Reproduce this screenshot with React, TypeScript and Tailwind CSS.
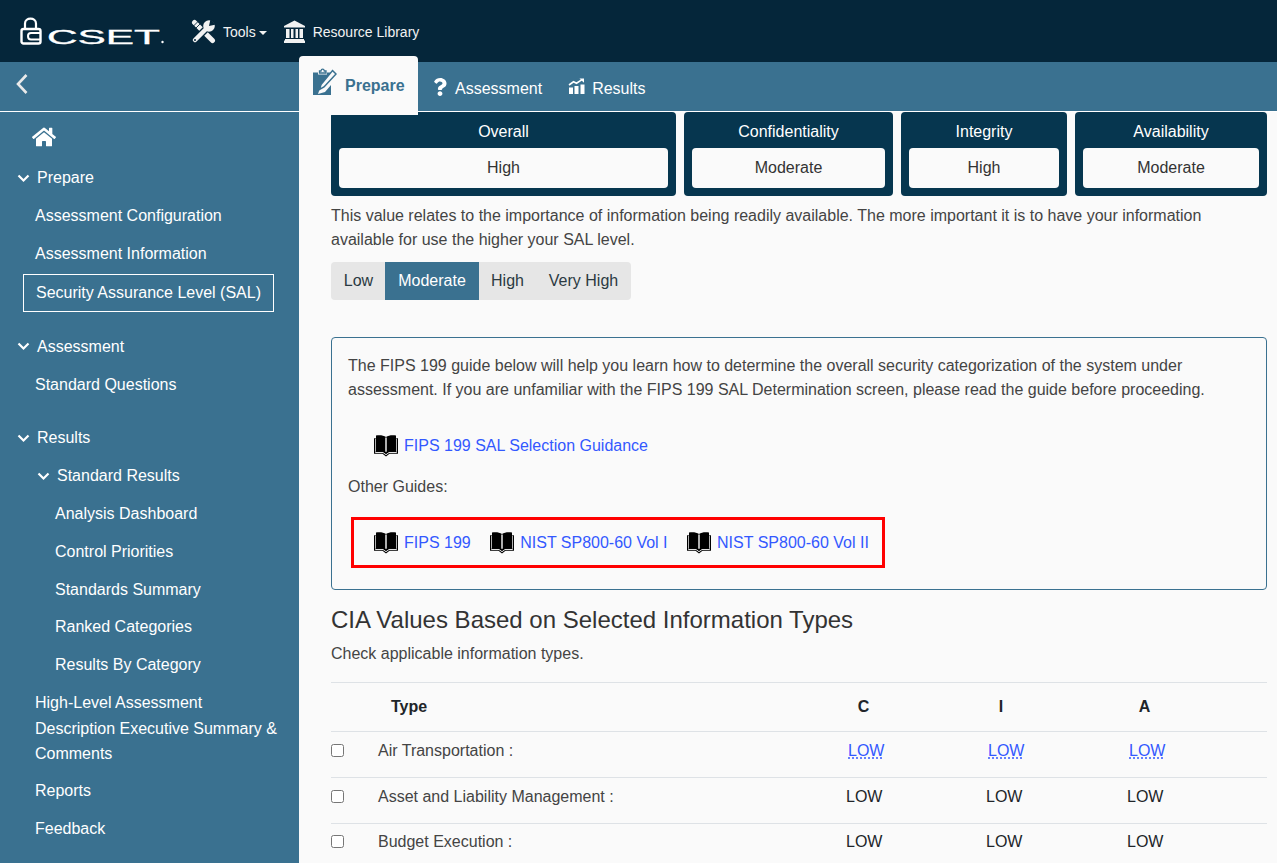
import React from "react";
import { FaHome, FaQuestion } from "react-icons/fa";

function Book() {
  return (
    <svg width="24" height="22" viewBox="0 0 24 21" preserveAspectRatio="none" className="shrink-0">
      <path d="M0 3H2V0.5C5 0 9.5 0 12 2C14.500 0 19 0 22 0.5V3H24V18H15.500L12 20.500L8.500 18H0Z" fill="#000" />
      <path d="M1.200 16.700H9L12 18.800L15 16.700H22.800" fill="none" stroke="#fafafa" strokeWidth="0.900" />
      <path d="M12 2.500V16" stroke="#fafafa" strokeWidth="1.400" />
      <path d="M1.500 3.500V16M22.500 3.500V16" stroke="#fafafa" strokeWidth="0.700" />
    </svg>
  );
}

function GuideLink({ label }: { label: string }) {
  return (
    <span className="flex items-center gap-[6px]">
      <Book />
      <a className="text-[#3358ff]">{label}</a>
    </span>
  );
}

function NavRow({ label, indent, chevron }: { label: string; indent: string; chevron?: boolean }) {
  return (
    <div className={`flex h-[37.8px] items-center text-white ${indent}`}>
      {chevron && (
        <svg width="13" height="9" viewBox="0 0 13 9" className="mr-[7px]">
          <path d="M1.500 1.500L6.500 6.500L11.500 1.500" fill="none" stroke="#fff" strokeWidth="2.200" />
        </svg>
      )}
      {label}
    </div>
  );
}

function Sidebar() {
  return (
    <aside className="flex w-[299px] shrink-0 flex-col bg-[#3a7190]">
      <div className="flex h-[47.500px] items-center pt-[2px] pl-[32px] text-white">
        <FaHome size={24} />
      </div>
      <NavRow label="Prepare" indent="pl-[17px]" chevron />
      <NavRow label="Assessment Configuration" indent="pl-[35px]" />
      <NavRow label="Assessment Information" indent="pl-[35px]" />
      <div className="mx-[23px] mt-px mb-[16px] flex h-[38px] w-[251px] items-center border border-white pl-[12px] text-white">
        Security Assurance Level (SAL)
      </div>
      <NavRow label="Assessment" indent="pl-[17px]" chevron />
      <NavRow label="Standard Questions" indent="pl-[35px]" />
      <div className="h-[16px]" />
      <NavRow label="Results" indent="pl-[17px]" chevron />
      <NavRow label="Standard Results" indent="pl-[37px]" chevron />
      <NavRow label="Analysis Dashboard" indent="pl-[55px]" />
      <NavRow label="Control Priorities" indent="pl-[55px]" />
      <NavRow label="Standards Summary" indent="pl-[55px]" />
      <NavRow label="Ranked Categories" indent="pl-[55px]" />
      <NavRow label="Results By Category" indent="pl-[55px]" />
      <div className="py-[6px] pr-[15px] pl-[35px] leading-[25.500px] text-white">
        High-Level Assessment Description Executive Summary &amp; Comments
      </div>
      <NavRow label="Reports" indent="pl-[35px]" />
      <NavRow label="Feedback" indent="pl-[35px]" />
    </aside>
  );
}

function SalCard({ title, value, width }: { title: string; value: string; width: string }) {
  return (
    <div className={`flex h-[84px] flex-col rounded-[4px] bg-[#06364f] px-[8px] ${width}`}>
      <div className="flex h-[36px] items-center justify-center pt-[4px] text-white">{title}</div>
      <div className="flex h-[40px] items-center justify-center rounded-[4px] bg-[#fafafa] text-[#333]">{value}</div>
    </div>
  );
}

function LevelCell({ link }: { link?: boolean }) {
  return link ? (
    <div className="pl-[2px]">
      <a className="text-[#3358ff] underline decoration-dotted underline-offset-2">LOW</a>
    </div>
  ) : (
    <div className="text-[#212529]">LOW</div>
  );
}

function TypeRow({ name, link, rowClass }: { name: string; link?: boolean; rowClass: string }) {
  return (
    <div className={`grid h-[46px] grid-cols-[47px_468px_140px_141px_1fr] items-start border-t border-[#dee2e6] ${rowClass}`}>
      <div className="flex h-[24px] items-center">
        <input type="checkbox" className="m-0 block" />
      </div>
      <div className="text-[#444]">{name}</div>
      <LevelCell link={link} />
      <LevelCell link={link} />
      <LevelCell link={link} />
    </div>
  );
}

function Main() {
  return (
    <main className="min-w-0 flex-1 bg-[#fafafa] pr-[10px] pl-[32px] text-[#444]">
      <div className="flex gap-[8px]">
        <SalCard title="Overall" value="High" width="w-[345px]" />
        <SalCard title="Confidentiality" value="Moderate" width="w-[209px]" />
        <SalCard title="Integrity" value="High" width="w-[166px]" />
        <SalCard title="Availability" value="Moderate" width="w-[192px]" />
      </div>
      <p className="mt-[8px] leading-[24px]">
        This value relates to the importance of information being readily available. The more important it is to have your information available for use the higher your SAL level.
      </p>
      <div className="mt-[10px] flex h-[38px] w-[300px] overflow-hidden rounded-[4px] bg-[#e6e6e6] text-[#2b3a42]">
        <div className="flex w-[54px] items-center justify-center pl-[1px]">Low</div>
        <div className="flex w-[94px] items-center justify-center bg-[#3a7190] text-white">Moderate</div>
        <div className="flex w-[57px] items-center justify-center">High</div>
        <div className="flex flex-1 items-center justify-center">Very High</div>
      </div>
      <section className="mt-[37px] h-[253px] rounded-[4px] border border-[#3a7190] px-[16px] pt-[16px]">
        <p className="leading-[24px]">
          The FIPS 199 guide below will help you learn how to determine the overall security categorization of the system under assessment. If you are unfamiliar with the FIPS 199 SAL Determination screen, please read the guide before proceeding.
        </p>
        <div className="mt-[32px] pl-[26px]">
          <GuideLink label="FIPS 199 SAL Selection Guidance" />
        </div>
        <p className="mt-[17px] leading-[24px]">Other Guides:</p>
        <div className="mt-[18px] ml-[3px] flex h-[51px] w-[534px] items-center gap-[19.500px] border-[3px] border-[#ff0000] pl-[20px]">
          <GuideLink label="FIPS 199" />
          <GuideLink label="NIST SP800-60 Vol I" />
          <GuideLink label="NIST SP800-60 Vol II" />
        </div>
      </section>
      <h2 className="mt-[16px] text-[24px] leading-[28.800px] text-[#333]">CIA Values Based on Selected Information Types</h2>
      <p className="mt-[7px] leading-[24px]">Check applicable information types.</p>
      <div className="mt-[16px] grid h-[49px] grid-cols-[60px_455px_140px_141px_1fr] items-center border-t border-[#dee2e6] font-bold text-[#212529]">
        <div />
        <div>Type</div>
        <div className="w-[35px] text-center">C</div>
        <div className="w-[30px] text-center">I</div>
        <div className="w-[35px] text-center">A</div>
      </div>
      <TypeRow name="Air Transportation :" link rowClass="pt-[7px]" />
      <TypeRow name="Asset and Liability Management :" rowClass="pt-[7px]" />
      <TypeRow name="Budget Execution :" rowClass="pt-[6px]" />
    </main>
  );
}

export default function App() {
  return (
    <div className="flex h-[863px] flex-col overflow-hidden bg-[#fafafa] font-['Liberation_Sans',Arial,sans-serif] text-[16px] leading-[24px]">
      <header className="flex h-[62px] shrink-0 items-center bg-[#05263a] text-[14px] text-[#f2f2f2]">
        <svg width="146" height="30" viewBox="0 0 146 30" className="ml-[20px] shrink-0">
          <path d="M5 13V7.500C5 1 16 1 16 7.500V13" fill="none" stroke="#fff" strokeWidth="2.200" />
          <rect x="1.500" y="13" width="19" height="14.500" rx="2" fill="none" stroke="#fff" strokeWidth="2.400" />
          <path d="M21 17H11Q8 17 8 20Q8 23.500 11 23.500H21" fill="none" stroke="#fff" strokeWidth="2" />
          <text x="27" y="27.500" fontFamily="Liberation Sans" fontWeight="400" fontSize="20" fill="#fff" stroke="#fff" strokeWidth="0.300" textLength="113" lengthAdjust="spacingAndGlyphs">CSET</text>
          <circle cx="142.500" cy="26" r="1.200" fill="#fff" />
        </svg>
        <svg width="25" height="25" viewBox="0 0 25 25" className="ml-[25px] shrink-0">
          <path d="M3.500 3.500L21.500 21.500" stroke="#f2f2f2" strokeWidth="5" strokeLinecap="round" />
          <path d="M2.500 7L7 2.500M5 9L9 5" stroke="#05263a" strokeWidth="0.900" />
          <path d="M4 21L16 9" stroke="#05263a" strokeWidth="7" />
          <path d="M4 21L16 9" stroke="#f2f2f2" strokeWidth="4.500" strokeLinecap="round" />
          <circle cx="18" cy="7" r="5.800" fill="#f2f2f2" />
          <path d="M18 7L19.500 0L25 5.500Z" fill="#05263a" />
          <circle cx="4" cy="21" r="1" fill="#05263a" />
        </svg>
        <span className="mt-[2px] ml-[7px]">Tools</span>
        <span className="mt-[3px] ml-[3px] h-0 w-0 border-x-[4px] border-t-[4px] border-x-transparent border-t-[#f2f2f2]" />
        <svg width="23" height="23" viewBox="0 0 23 23" className="ml-[16px] shrink-0">
          <path d="M11.500 0.500L22 6V7.500H1V6Z" fill="#f2f2f2" />
          <path d="M3 9H6.500V18H3ZM8 9H10.500V18H8ZM12.500 9H15V18H12.500ZM16.500 9H20V18H16.500Z" fill="#f2f2f2" />
          <path d="M2 19H21V20.500H22V23H1V20.500H2Z" fill="#f2f2f2" />
        </svg>
        <span className="mt-[2px] ml-[7px]">Resource Library</span>
      </header>
      <div className="flex h-[50px] shrink-0 items-start border-b border-white bg-[#3a7190] text-white">
        <div className="flex h-[44px] w-[299px] shrink-0 items-center pl-[14px]">
          <svg width="18" height="22" viewBox="0 0 18 22">
            <path d="M12.500 2L4 11L12.500 20" fill="none" stroke="#eaeaea" strokeWidth="2.600" />
          </svg>
        </div>
        <div className="relative z-10 -mt-[6px] flex h-[59px] w-[119px] shrink-0 items-center rounded-t-[4px] bg-[#fafafa] pl-[13px] font-bold text-[#3a7190]">
          <svg width="25" height="28" viewBox="0 0 25 28" className="mr-[8px] mb-[7px] shrink-0">
            <path d="M1 4.500H6V6.500H15V4.500H19V8L8 20L6 26L13 24L19 17V27H1Z" fill="#3a7190" />
            <path d="M7.500 5V3H9C9.300 0.500 12 0.500 12.300 3H14V5Z" fill="none" stroke="#3a7190" strokeWidth="1.300" />
            <path d="M20.500 2.500L24 6L12 19L7.500 21.500L9 16.500Z" fill="#fafafa" stroke="#3a7190" strokeWidth="1.500" />
          </svg>
          Prepare
        </div>
        <div className="mt-[2px] ml-[13px] flex h-[49px] items-center">
          <FaQuestion size={18} className="-mt-[4px] shrink-0" />
          <span className="ml-[6px]">Assessment</span>
        </div>
        <div className="mt-[2px] ml-[26px] flex h-[49px] items-center">
          <svg width="17" height="16" viewBox="0 0 17 15" preserveAspectRatio="none" className="-mt-[5px] shrink-0">
            <path d="M1 9V15H5V9ZM6.500 7.500V15H10.500V7.500ZM12.500 6V15H16.500V6Z" fill="#fff" />
            <path d="M1 6.500L5.500 3.500L8.500 5L14 1.500" fill="none" stroke="#fff" strokeWidth="1.600" />
            <path d="M11.500 0.500H16V4.500Z" fill="#fff" />
          </svg>
          <span className="ml-[7px]">Results</span>
        </div>
      </div>
      <div className="flex min-h-0 flex-1">
        <Sidebar />
        <Main />
      </div>
    </div>
  );
}
